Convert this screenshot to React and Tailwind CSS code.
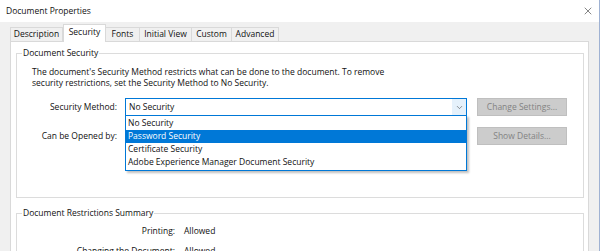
import { X, ChevronDown } from "lucide-react";

const TABS = [
  { label: "Description", w: "w-[53px]" },
  { label: "Security", w: "w-[43px]", active: true },
  { label: "Fonts", w: "w-[34px]" },
  { label: "Initial View", w: "w-[52px]" },
  { label: "Custom", w: "w-[40px]" },
  { label: "Advanced", w: "w-[47px]" },
];

const METHODS = [
  "No Security",
  "Password Security",
  "Certificate Security",
  "Adobe Experience Manager Document Security",
];

function GroupBox({ title, className, children }) {
  return (
    <fieldset className={`border border-[#dcdcdc] ${className}`}>
      <legend className="ml-[5px] px-[1px] leading-[12px]">{title}</legend>
      {children}
    </fieldset>
  );
}

export default function App() {
  return (
    <div className="relative flex h-[251px] w-[600px] flex-col overflow-hidden border-r border-[#9fb2d3] bg-[#f0f0f0] font-['Open_Sans',sans-serif] text-[8.5px] text-[#111]">
      {/* Title bar */}
      <div className="flex h-[22px] shrink-0 items-center justify-between bg-white pl-[6px] pr-[5px]">
        <span>Document Properties</span>
        <X size={12} strokeWidth={1.2} className="text-[#333]" />
      </div>

      {/* Tabs */}
      <div className="flex h-[19px] shrink-0 items-end pl-[10px]">
        {TABS.map((t, i) => (
          <div
            key={t.label}
            className={`${t.w} flex items-center justify-center border-[#d9d9d9] ${
              t.active
                ? "relative z-10 -mb-px h-[18px] border-x border-t bg-white pb-[2px]"
                : `h-[14px] border-t ${i === 0 ? "border-l" : ""} border-r bg-[#f0f0f0]`
            }`}
          >
            {t.label}
          </div>
        ))}
      </div>

      {/* Tab panel */}
      <div className="ml-[10px] w-[579px] flex-1 border border-[#d9d9d9] bg-white pl-[5px] pr-[4px] pt-[5px]">
        <GroupBox title="Document Security" className="h-[151px]">
          <div className="pl-[15px] pt-[7px] leading-[11px]">
            <p>The document's Security Method restricts what can be done to the document. To remove</p>
            <p>security restrictions, set the Security Method to No Security.</p>
          </div>

          <div className="mt-[10px] flex items-center">
            <div className="w-[100px] text-right">Security Method:</div>
            <div className="relative ml-[8px]">
              <div className="flex h-[18px] w-[342px] items-center border border-[#0078d7] bg-white">
                <span className="flex-1 pl-[3px]">No Security</span>
                <span className="flex h-full w-[14px] items-center justify-center bg-[#e5f1fb]">
                  <ChevronDown size={9} strokeWidth={1.5} className="text-[#444]" />
                </span>
              </div>
              {/* Open dropdown list */}
              <div className="absolute left-0 top-[17px] z-20 w-[342px] border border-[#0078d7] bg-white py-[1px] shadow-[2px_2px_2px_rgba(0,0,0,0.25)]">
                {METHODS.map((m) => (
                  <div
                    key={m}
                    className={`flex h-[13px] items-center pl-[2px] ${
                      m === "Password Security" ? "bg-[#0078d7] text-white" : ""
                    }`}
                  >
                    {m}
                  </div>
                ))}
              </div>
            </div>
            <button className="ml-[10px] flex h-[18px] w-[90px] items-center justify-center border border-[#bfbfbf] bg-[#cccccc] text-[#838383]">
              Change Settings...
            </button>
          </div>

          <div className="mt-[11px] flex items-center">
            <div className="w-[100px] text-right">Can be Opened by:</div>
            <div className="ml-[8px] w-[342px]" />
            <button className="ml-[10px] flex h-[18px] w-[90px] items-center justify-center border border-[#bfbfbf] bg-[#cccccc] text-[#838383]">
              Show Details...
            </button>
          </div>
        </GroupBox>

        <GroupBox title="Document Restrictions Summary" className="mt-[9px] h-[80px]">
          <div className="flex flex-col gap-[7px] pt-[6px]">
            <div className="flex items-center">
              <div className="w-[158px] text-right">Printing:</div>
              <div className="ml-[9px]">Allowed</div>
            </div>
            <div className="flex items-center">
              <div className="w-[158px] text-right">Changing the Document:</div>
              <div className="ml-[9px]">Allowed</div>
            </div>
          </div>
        </GroupBox>
      </div>
    </div>
  );
}
